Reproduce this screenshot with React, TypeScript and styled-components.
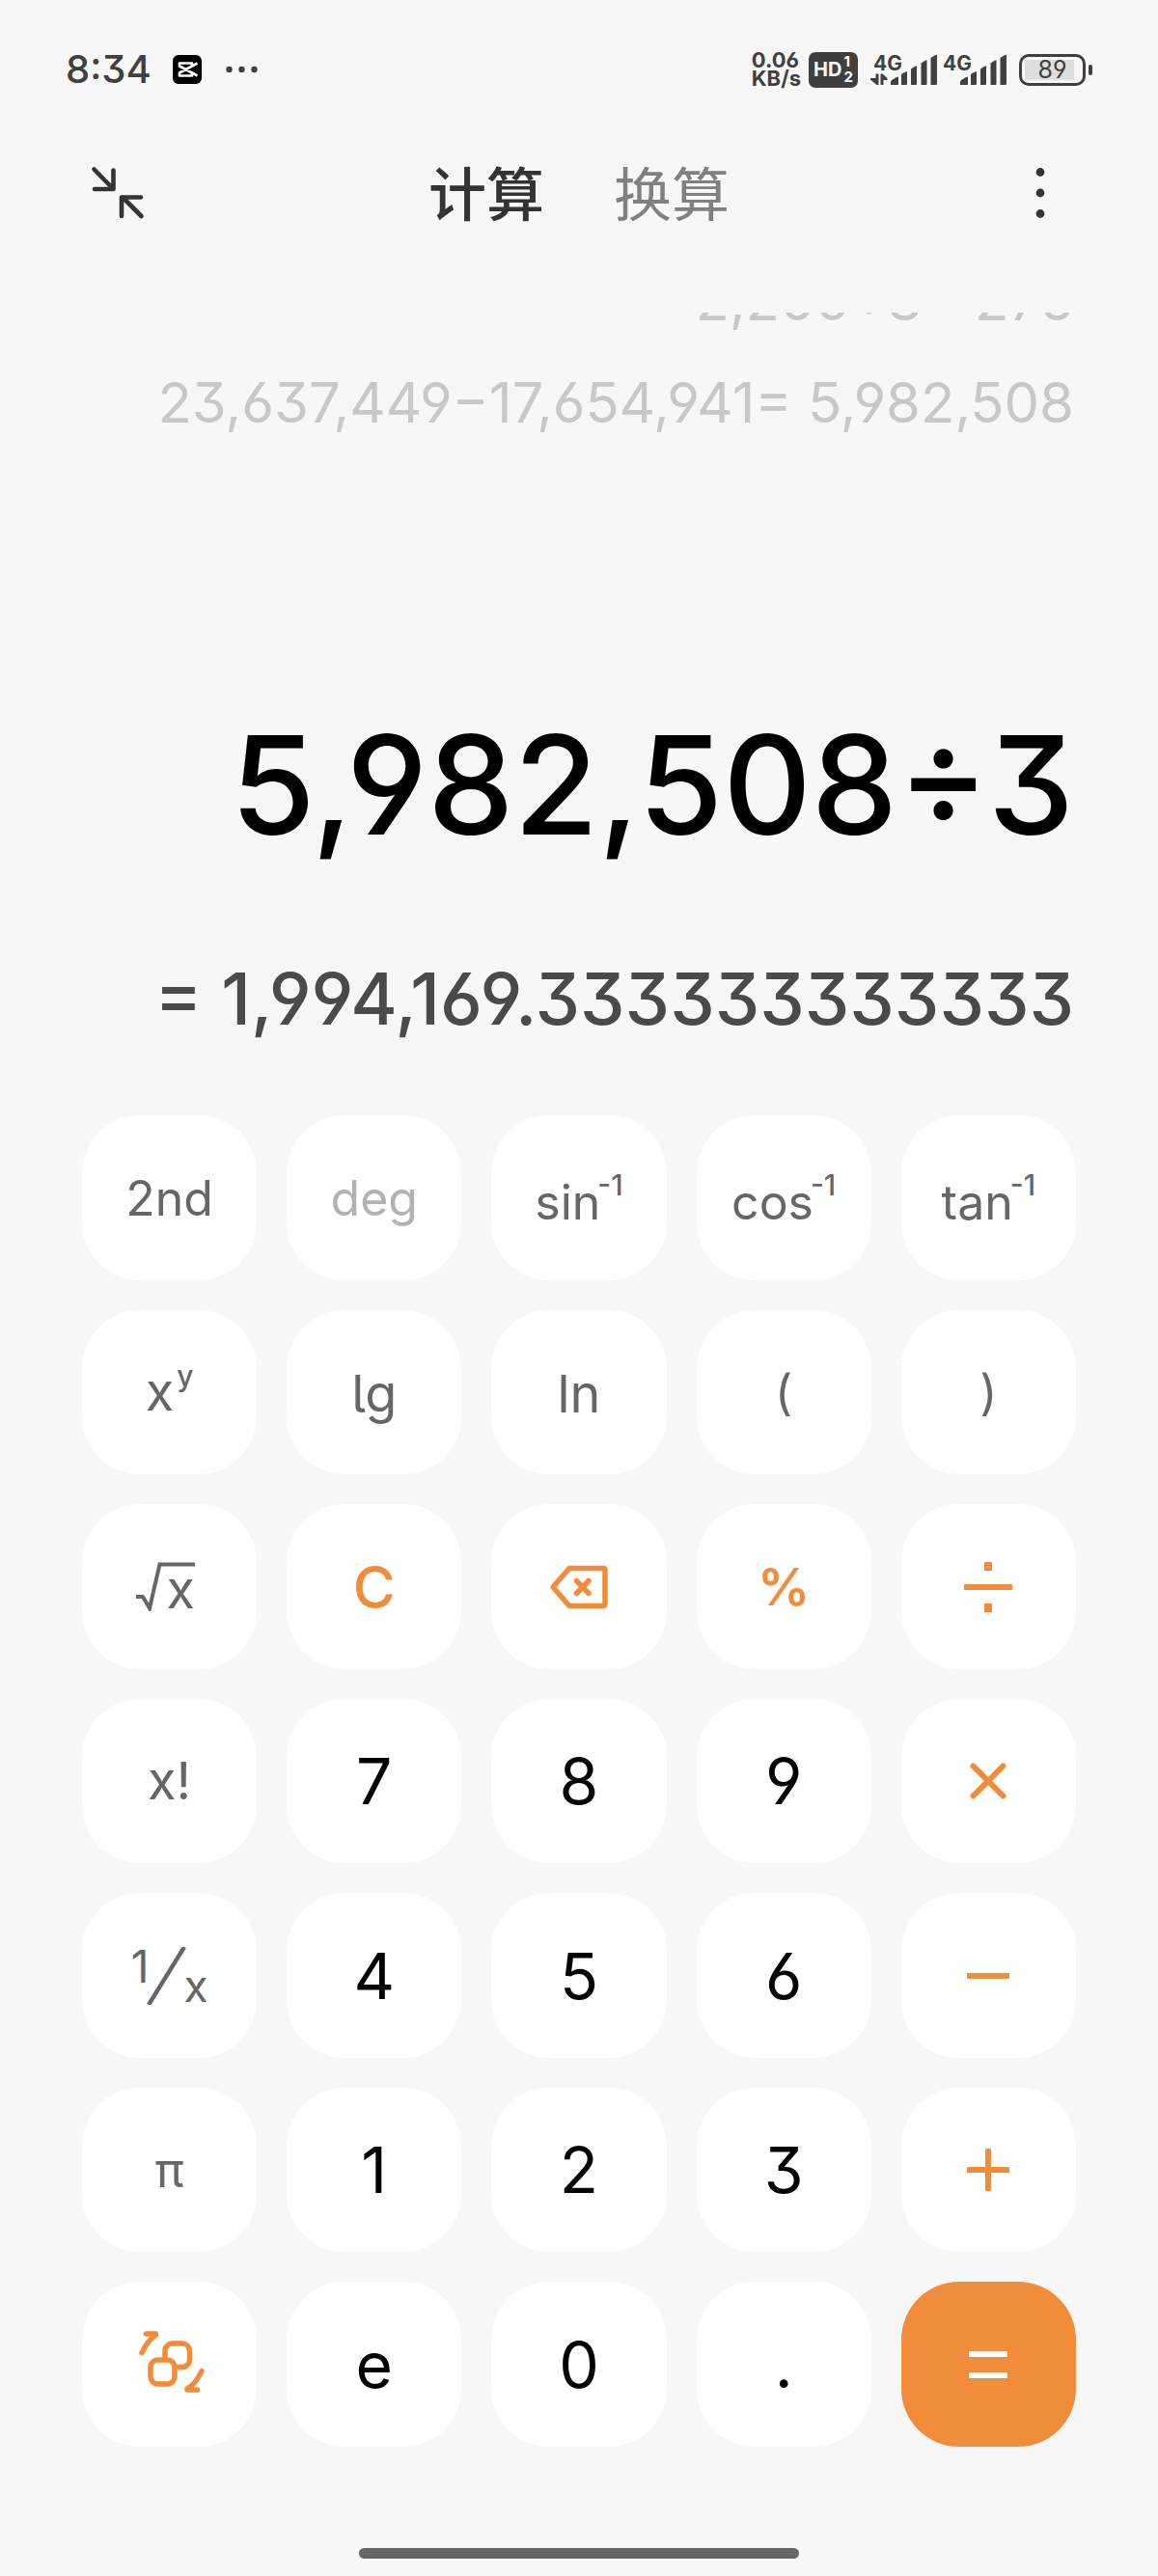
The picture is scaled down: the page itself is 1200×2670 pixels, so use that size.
import React from "react";
import styled, { createGlobalStyle, css } from "styled-components";

const ink = "#333333";
const accent = "#f08c3a";

const GlobalStyle = createGlobalStyle`
  *, *::before, *::after { box-sizing: border-box; }
  body {
    margin: 0;
    background: #f7f7f7;
    color: ${ink};
    font-family: Inter, "Noto Sans CJK SC", sans-serif;
    font-feature-settings: "cv03", "cv04", "cv09";
  }
  button {
    margin: 0;
    padding: 0;
    border: 0;
    background: none;
    color: inherit;
    font: inherit;
    font-feature-settings: inherit;
    cursor: pointer;
  }
  svg { display: block; flex: none; }
`;

const Screen = styled.div`
  display: flex;
  flex-direction: column;
  min-height: 100vh;
`;

/* ---------- status bar ---------- */

const StatusBar = styled.div`
  display: flex;
  align-items: center;
  justify-content: space-between;
  height: 144px;
  padding: 0 68px;
  color: #404040;
`;

const StatusGroup = styled.div<{ $gap: number }>`
  display: flex;
  align-items: center;
  gap: ${(p) => p.$gap}px;
`;

const Clock = styled.time`
  font-size: 40px;
  line-height: 48px;
  font-weight: 500;
`;

const Speed = styled.div`
  display: flex;
  flex-direction: column;
  font-size: 22px;
  line-height: 19px;
  font-weight: 700;
`;

const HdBadge = styled.div`
  display: flex;
  align-items: center;
  justify-content: center;
  gap: 2px;
  width: 51px;
  height: 37px;
  border-radius: 7px;
  background: #404040;
  color: #ffffff;
  font-size: 20px;
  font-weight: 700;
`;

const HdLines = styled.span`
  display: flex;
  flex-direction: column;
  font-size: 15px;
  line-height: 16px;
`;

const Signal = styled.div`
  display: grid;
  > * { grid-area: 1 / 1; }
`;

const SignalLabel = styled.span<{ $indent?: boolean }>`
  justify-self: start;
  padding-left: ${(p) => (p.$indent ? 3 : 0)}px;
  font-size: 21px;
  line-height: 20px;
  font-weight: 700;
`;

const SignalBars = styled.svg`
  align-self: end;
`;

const Battery = styled.div`
  display: flex;
  align-items: center;
  gap: 3px;
`;

const BatteryBody = styled.div`
  width: 69px;
  height: 33px;
  padding: 3px;
  border: 3px solid #404040;
  border-radius: 10px;
`;

const BatteryLevel = styled.div`
  display: flex;
  align-items: center;
  justify-content: center;
  height: 21px;
  border-radius: 3px;
  background: linear-gradient(to right, #dedede 89%, transparent 89%);
  font-size: 25px;
  line-height: 21px;
`;

const BatteryTip = styled.div`
  width: 4px;
  height: 11px;
  border-radius: 2px;
  background: #404040;
`;

/* ---------- header ---------- */

const Header = styled.header`
  display: flex;
  align-items: center;
  justify-content: space-between;
  height: 112px;
  padding: 0 82px;
`;

const IconButton = styled.button`
  display: flex;
  align-items: center;
  justify-content: center;
  width: 80px;
  height: 80px;
`;

const Tabs = styled.div`
  display: flex;
  gap: 72px;
  padding-bottom: 4px;
`;

const Tab = styled.button<{ $active?: boolean }>`
  font-family: "Noto Sans CJK SC", sans-serif;
  font-size: 60px;
  line-height: 88px;
  font-weight: ${(p) => (p.$active ? 500 : 400)};
  color: ${(p) => (p.$active ? ink : "#808080")};
`;

/* ---------- display ---------- */

const Display = styled.section`
  display: flex;
  flex: 1;
  flex-direction: column;
  padding: 68px 87px 71px;
  text-align: right;
  white-space: nowrap;
`;

const History = styled.ol`
  display: flex;
  flex-direction: column;
  justify-content: flex-end;
  height: 146px;
  margin: 0 0 auto;
  padding: 0;
  overflow: hidden;
  list-style: none;
  color: #c8c8c8;
  font-size: 58px;
  line-height: 106px;
`;

const Expression = styled.output`
  display: block;
  margin-bottom: 80px;
  color: #000000;
  font-size: 142px;
  line-height: 184px;
  font-weight: 500;
`;

const Result = styled.output`
  display: block;
  color: #4a4a4a;
  font-size: 74px;
  line-height: 100px;
  font-weight: 500;
`;

/* ---------- keypad ---------- */

type Tone = "function" | "muted" | "digit" | "action" | "equals";

const tones = {
  function: css`
    color: #666666;
    font-size: 50px;
  `,
  muted: css`
    color: #b2b2b2;
    font-size: 50px;
  `,
  digit: css`
    color: #000000;
    font-size: 66px;
  `,
  action: css`
    color: ${accent};
    font-size: 60px;
    font-weight: 500;
  `,
  equals: css`
    color: #ffffff;
    background: ${accent};
  `,
};

const Keypad = styled.main`
  display: grid;
  grid-template-columns: repeat(5, 1fr);
  gap: 31px;
  padding: 0 85px;
`;

const Key = styled.button<{ $tone: Tone }>`
  display: flex;
  align-items: center;
  justify-content: center;
  aspect-ratio: 17 / 16;
  border-radius: 60px;
  background: #ffffff;
  line-height: 1;
  ${(p) => tones[p.$tone]}
`;

const Trig = styled.span`
  padding-top: 8px;
`;

const Large = styled.span`
  font-size: 54px;
`;

const Log = styled(Large)`
  padding-top: 4px;
  font-feature-settings: "cv05";
`;

const Ln = styled(Large)`
  padding-top: 4px;
`;

const Percent = styled(Large)`
  font-weight: 600;
`;

const Sup = styled.sup`
  margin-left: -3px;
  font-size: 30px;
  line-height: 0;
  font-weight: 500;
  vertical-align: 25px;
`;

const Exponent = styled(Sup)`
  margin-left: 3px;
`;

const Root = styled.span`
  display: grid;
  padding-right: 8px;
  > * { grid-area: 1 / 1; }
`;

const Radicand = styled(Large)`
  align-self: end;
  justify-self: end;
  line-height: 44px;
`;

const Fraction = styled.span`
  display: flex;
  align-items: center;
  font-size: 46px;
`;

const Numerator = styled.span`
  align-self: flex-start;
  margin-right: -2px;
  line-height: 40px;
`;

const Denominator = styled.span`
  align-self: flex-end;
  margin-left: -4px;
  line-height: 40px;
`;

/* ---------- home indicator ---------- */

const HomeArea = styled.footer`
  display: flex;
  justify-content: center;
  padding: 105px 0 18px;
`;

const HomeBar = styled.div`
  width: 38%;
  height: 11px;
  border-radius: 6px;
  background: #666666;
`;

/* ---------- icons ---------- */

const AppIcon = () => (
  <svg width="30" height="30" viewBox="0 0 30 30" aria-hidden="true">
    <rect width="30" height="30" rx="6" fill="#000" />
    <path
      d="M25.500 8.500L20 11.500M25.500 21.500L20 18.500M20 11.500V8.500H7V11.500L20 18.500V21.500H7V18.500L20 11.500"
      fill="none"
      stroke="#fff"
      strokeWidth="2.600"
      strokeLinejoin="round"
    />
  </svg>
);

const MoreDots = () => (
  <svg width="36" height="8" viewBox="-3 0 36 8" fill="currentColor" aria-hidden="true">
    <circle cx="3.500" cy="4" r="3.200" />
    <circle cx="16.500" cy="4" r="3.200" />
    <circle cx="29.500" cy="4" r="3.200" />
  </svg>
);

const Bars = ({ data }: { data?: boolean }) => (
  <SignalBars
    width={data ? 69 : 66}
    height="33"
    viewBox={data ? "0 0 69 33" : "3 0 66 33"}
    fill="currentColor"
    aria-hidden="true"
  >
    {data && (
      <path d="M5.500 20.500h3V32H6.500L0 26.500V25h5.500zM10.500 32V20.500h2L17.500 25v2h-4v5z" />
    )}
    <path d="M21 32v-3.500c0-1 6-5 8-5V31q0 1-1 1z" />
    <path d="M32 32V21q3-2 6-3v13q0 1-1 1h-4z" />
    <path d="M42 32V15.500q3-2.500 6-3.500v19q0 1-1 1h-4z" />
    <path d="M52.500 32V9.500q3-2.500 6-3.500v25q0 1-1 1h-4z" />
    <path d="M62.500 32V4q3-2.500 6.500-3.500V31q0 1-1 1h-4.500z" />
  </SignalBars>
);

const CollapseIcon = () => (
  <svg width="56" height="56" viewBox="0 0 56 56" fill="none" stroke="currentColor" strokeWidth="4.600" strokeLinecap="round" strokeLinejoin="round" aria-hidden="true">
    <path d="M3.500 3.500L23 23.500M23.500 4.500V24H4" />
    <path d="M52.500 52L33 32.500M32 52V32.500H52" />
  </svg>
);

const MenuIcon = () => (
  <svg width="10" height="54" viewBox="0 0 10 54" fill="currentColor" aria-hidden="true">
    <circle cx="5" cy="5.500" r="4.400" />
    <circle cx="5" cy="27" r="4.400" />
    <circle cx="5" cy="48.500" r="4.400" />
  </svg>
);

const RootSign = () => (
  <svg width="61" height="51" viewBox="0 0 61 51" fill="none" stroke="currentColor" strokeWidth="4" aria-hidden="true">
    <path d="M0 36H7L14 48L24.500 2.500H61" />
  </svg>
);

const Slash = () => (
  <svg width="42" height="60" viewBox="0 0 42 60" fill="none" stroke="currentColor" strokeWidth="4.400" aria-hidden="true">
    <path d="M2 60L39 0" />
  </svg>
);

const BackspaceIcon = () => (
  <svg width="62" height="46" viewBox="0 0 62 46" fill="none" stroke="currentColor" strokeWidth="5.500" strokeLinecap="round" strokeLinejoin="round" aria-hidden="true">
    <path d="M21 3.500H56Q58 3.500 58 5.500V40.500Q58 42.500 56 42.500H21L4 23Z" />
    <path d="M28.500 16.500L41 29.500M41 16.500L28.500 29.500" />
  </svg>
);

const DivideIcon = () => (
  <svg width="50" height="52" viewBox="0 0 50 52" fill="currentColor" aria-hidden="true">
    <rect x="0" y="23" width="50" height="6" rx="1" />
    <rect x="21" y="0" width="8" height="9" />
    <rect x="21" y="43" width="8" height="9" />
  </svg>
);

const TimesIcon = () => (
  <svg width="38" height="38" viewBox="0 0 38 38" stroke="currentColor" strokeWidth="6" strokeLinecap="round" aria-hidden="true">
    <path d="M3.500 3.500L34.500 34.500M34.500 3.500L3.500 34.500" />
  </svg>
);

const MinusIcon = () => (
  <svg width="44" height="6" viewBox="0 0 44 6" fill="currentColor" aria-hidden="true">
    <rect width="44" height="6" rx="1" />
  </svg>
);

const PlusIcon = () => (
  <svg width="44" height="44" viewBox="0 0 44 44" fill="currentColor" aria-hidden="true">
    <rect y="19" width="44" height="6" rx="1" />
    <rect x="19" width="6" height="44" rx="1" />
  </svg>
);

const EqualsIcon = () => (
  <svg width="40" height="28" viewBox="0 0 40 28" fill="currentColor" aria-hidden="true">
    <rect width="40" height="6" rx="1" />
    <rect y="22" width="40" height="6" rx="1" />
  </svg>
);

const SwitchIcon = () => (
  <svg width="76" height="74" viewBox="-4 0 76 74" fill="none" stroke="currentColor" strokeWidth="5.500" strokeLinecap="round" strokeLinejoin="round" aria-hidden="true">
    <path d="M5 24.500C8.500 17 13 10.500 19.500 6M9.500 5H19.500" />
    <path d="M67 43.500C63.500 51.500 58.500 58 52 62M62.500 63H52" />
    <rect x="14" y="32" width="25" height="25" rx="7.500" />
    <path d="M29 31V22.500a7.500 7.500 0 0 1 7.500-7.500H47a7.500 7.500 0 0 1 7.500 7.500V32a7.500 7.500 0 0 1-7.500 7.500H41" />
  </svg>
);

/* ---------- content ---------- */

const history = ["2,200÷8= 275", "23,637,449−17,654,941= 5,982,508"];

interface KeyDef {
  name: string;
  tone: Tone;
  face?: React.ReactNode;
}

const trig = (name: string): KeyDef => ({
  name: `${name}⁻¹`,
  tone: "function",
  face: (
    <Trig>
      {name}
      <Sup>-1</Sup>
    </Trig>
  ),
});

const digit = (name: string): KeyDef => ({ name, tone: "digit" });

const keys: KeyDef[] = [
  { name: "2nd", tone: "function" },
  { name: "deg", tone: "muted" },
  trig("sin"),
  trig("cos"),
  trig("tan"),

  { name: "xʸ", tone: "function", face: <Large>x<Exponent>y</Exponent></Large> },
  { name: "lg", tone: "function", face: <Log>lg</Log> },
  { name: "ln", tone: "function", face: <Ln>ln</Ln> },
  { name: "(", tone: "function" },
  { name: ")", tone: "function" },

  { name: "√x", tone: "function", face: <Root><RootSign /><Radicand>x</Radicand></Root> },
  { name: "C", tone: "action" },
  { name: "删除", tone: "action", face: <BackspaceIcon /> },
  { name: "%", tone: "action", face: <Percent>%</Percent> },
  { name: "÷", tone: "action", face: <DivideIcon /> },

  { name: "x!", tone: "function", face: <Large>x!</Large> },
  digit("7"),
  digit("8"),
  digit("9"),
  { name: "×", tone: "action", face: <TimesIcon /> },

  {
    name: "1/x",
    tone: "function",
    face: (
      <Fraction>
        <Numerator>1</Numerator>
        <Slash />
        <Denominator>x</Denominator>
      </Fraction>
    ),
  },
  digit("4"),
  digit("5"),
  digit("6"),
  { name: "−", tone: "action", face: <MinusIcon /> },

  { name: "π", tone: "function" },
  digit("1"),
  digit("2"),
  digit("3"),
  { name: "+", tone: "action", face: <PlusIcon /> },

  { name: "切换键盘", tone: "action", face: <SwitchIcon /> },
  digit("e"),
  digit("0"),
  digit("."),
  { name: "=", tone: "equals", face: <EqualsIcon /> },
];

export default function App() {
  return (
    <Screen>
      <GlobalStyle />
      <StatusBar>
        <StatusGroup $gap={22}>
          <Clock>8:34</Clock>
          <AppIcon />
          <MoreDots />
        </StatusGroup>
        <StatusGroup $gap={13}>
          <StatusGroup $gap={8}>
            <Speed>
              <span>0.06</span>
              <span>KB/s</span>
            </Speed>
            <HdBadge>
              HD
              <HdLines>
                <span>1</span>
                <span>2</span>
              </HdLines>
            </HdBadge>
          </StatusGroup>
          <StatusGroup $gap={6}>
            <Signal>
              <Bars data />
              <SignalLabel $indent>4G</SignalLabel>
            </Signal>
            <Signal>
              <Bars />
              <SignalLabel>4G</SignalLabel>
            </Signal>
          </StatusGroup>
          <Battery>
            <BatteryBody>
              <BatteryLevel>89</BatteryLevel>
            </BatteryBody>
            <BatteryTip />
          </Battery>
        </StatusGroup>
      </StatusBar>

      <Header>
        <IconButton type="button" aria-label="小窗">
          <CollapseIcon />
        </IconButton>
        <Tabs role="tablist">
          <Tab type="button" role="tab" aria-selected="true" $active>
            计算
          </Tab>
          <Tab type="button" role="tab" aria-selected="false">
            换算
          </Tab>
        </Tabs>
        <IconButton type="button" aria-label="更多">
          <MenuIcon />
        </IconButton>
      </Header>

      <Display>
        <History>
          {history.map((entry) => (
            <li key={entry}>{entry}</li>
          ))}
        </History>
        <Expression>5,982,508÷3</Expression>
        <Result>= 1,994,169.333333333333</Result>
      </Display>

      <Keypad>
        {keys.map((key) => (
          <Key key={key.name} type="button" $tone={key.tone} aria-label={key.name}>
            {key.face ?? key.name}
          </Key>
        ))}
      </Keypad>

      <HomeArea>
        <HomeBar />
      </HomeArea>
    </Screen>
  );
}
